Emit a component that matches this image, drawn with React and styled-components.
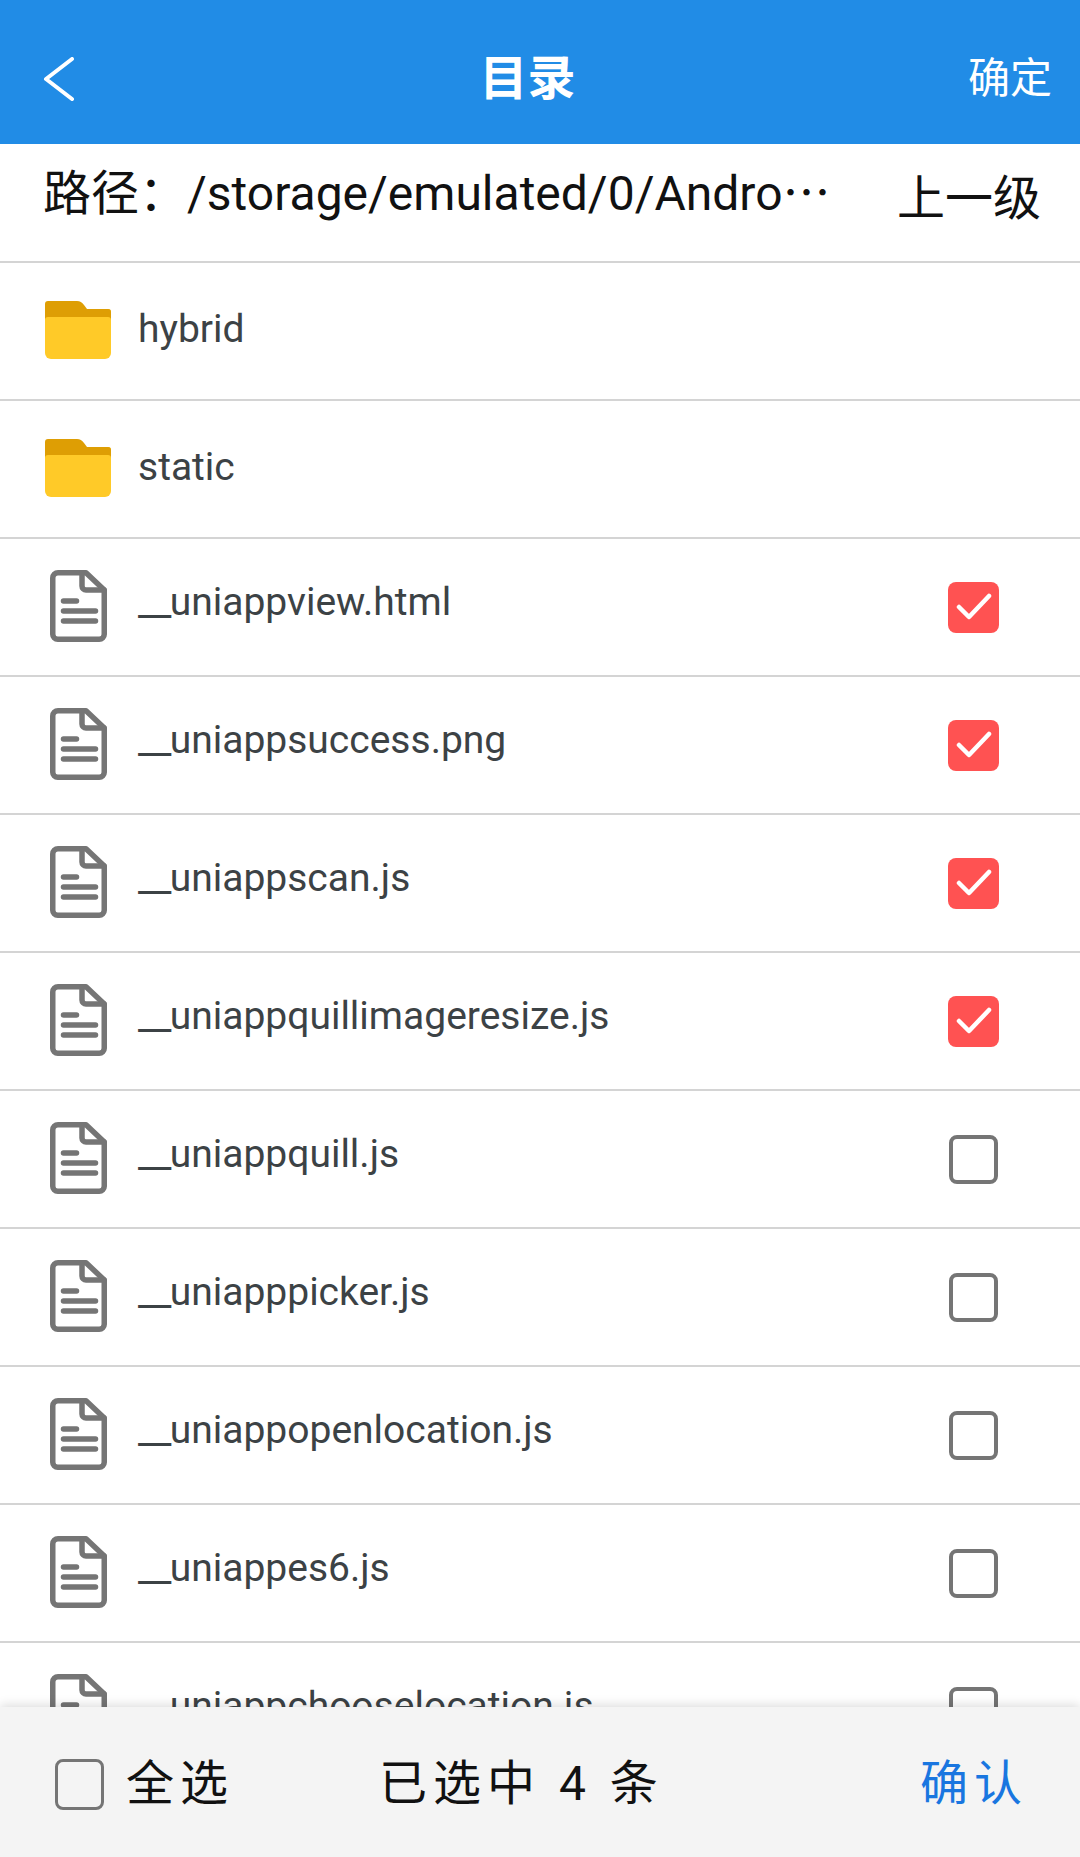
import React from "react";
import styled, { createGlobalStyle } from "styled-components";

const GlobalStyle = createGlobalStyle`
  html, body {
    margin: 0;
    padding: 0;
    background: #fff;
    font-family: Roboto, "Noto Sans CJK SC", sans-serif;
  }
`;

const Page = styled.div`
  position: relative;
  width: 1080px;
  height: 1857px;
  overflow: hidden;
  background: #fff;
`;

const Header = styled.header`
  height: 144px;
  box-sizing: border-box;
  background: #218ce6;
  color: #fff;
  display: grid;
  grid-template-columns: 1fr auto 1fr;
  align-items: center;
  padding: 14px 28px 0 43px;
`;

const BackButton = styled.div`
  display: flex;
  align-items: center;
`;

const Title = styled.div`
  font-size: 48px;
  font-weight: 700;
  line-height: 1;
  margin-left: -40px;
`;

const Action = styled.div`
  font-size: 42px;
  line-height: 1;
  text-align: right;
`;

const PathBar = styled.div`
  height: 117px;
  border-bottom: 2px solid #d4d4d4;
  display: flex;
  align-items: flex-start;
  padding: 0 39px 0 43px;
`;

const PathText = styled.div`
  font-size: 48px;
  line-height: 62px;
  margin-top: 14px;
  color: #111;
  white-space: nowrap;
`;

const Ellipsis = styled.span`
  font-family: "Noto Sans CJK SC", sans-serif;
`;

const ParentLink = styled.div`
  margin-left: auto;
  font-size: 48px;
  line-height: 62px;
  margin-top: 24px;
  color: #111;
`;

const List = styled.div`
  display: flex;
  flex-direction: column;
`;

const Row = styled.div`
  height: 136px;
  flex: none;
  border-bottom: 2px solid #d4d4d4;
  display: flex;
  align-items: center;
  padding: 0 81px 0 45px;
`;

const IconSlot = styled.div`
  width: 66px;
  margin: 0 27px 2px 0;
  display: flex;
  justify-content: center;
`;

const Name = styled.div`
  font-size: 39px;
  line-height: 48px;
  color: #3c4245;
  padding-bottom: ${p => (p.$file ? 10 : 4)}px;
`;

const Prefix = styled.span`
  letter-spacing: -1.750px;
`;

const Check = styled.div`
  margin-left: auto;
  margin-right: ${p => (p.$on ? 0 : 1)}px;
  width: ${p => (p.$on ? 51 : 49)}px;
  height: ${p => (p.$on ? 51 : 49)}px;
  box-sizing: border-box;
  border-radius: 8px;
  background: ${p => (p.$on ? "#ff5252" : "#fff")};
  border: ${p => (p.$on ? "none" : "4px solid #757575")};
  display: flex;
  align-items: center;
  justify-content: center;
`;

const Footer = styled.footer`
  position: absolute;
  left: 0;
  right: 0;
  bottom: 0;
  height: 150px;
  box-sizing: border-box;
  background: #f4f4f4;
  box-shadow: 0 -2px 10px rgba(0, 0, 0, 0.14);
  display: flex;
  align-items: center;
  padding: 4px 52px 0 55px;
`;

const SelectAll = styled.div`
  display: flex;
  align-items: center;
  width: 324px;
`;

const FooterBox = styled.div`
  width: 49px;
  height: 51px;
  box-sizing: border-box;
  border: 3px solid #757575;
  border-radius: 8px;
  margin-right: 22px;
`;

const FooterText = styled.div`
  font-size: 48px;
  line-height: 1;
  letter-spacing: 6px;
  color: ${p => (p.$accent ? "#1976e0" : "#111")};
  margin-left: ${p => (p.$accent ? "auto" : "0")};
  white-space: pre;
`;

const FolderIcon = () => (
  <svg width="66" height="58" viewBox="0 0 66 58">
    <path d="M0 11a3 3 0 0 1 3-3h60a3 3 0 0 1 3 3v41a6 6 0 0 1-6 6H6a6 6 0 0 1-6-6z" fill="#ffca28" />
    <path d="M0 3a3 3 0 0 1 3-3h29c3 0 5 1.500 7 4l3 4h21a3 3 0 0 1 3 3v8a3 3 0 0 0-3-3H3a3 3 0 0 0-3 3z" fill="#de9e04" />
  </svg>
);

const FileIcon = () => (
  <svg width="57" height="72" viewBox="0 0 57 72" fill="none" stroke="#757575" strokeWidth="5.500" strokeLinecap="round" strokeLinejoin="round">
    <path d="M8 2.750h28L54.250 20v44.250a5 5 0 0 1-5 5H7.750a5 5 0 0 1-5-5V8a5.250 5.250 0 0 1 5.250-5.250z" />
    <path d="M32 3v13a4 4 0 0 0 4 4h18" />
    <path d="M13.500 31h13M13.500 41h32M13.500 51h32" />
  </svg>
);

const Tick = () => (
  <svg width="36" height="28" viewBox="0 0 36 28" fill="none" stroke="#fff" strokeWidth="4.500" strokeLinecap="round" strokeLinejoin="round">
    <path d="M3 14l10 10L33 3" />
  </svg>
);

const entries = [
  { name: "hybrid", folder: true },
  { name: "static", folder: true },
  { name: "uniappview.html", on: true },
  { name: "uniappsuccess.png", on: true },
  { name: "uniappscan.js", on: true },
  { name: "uniappquillimageresize.js", on: true },
  { name: "uniappquill.js" },
  { name: "uniapppicker.js" },
  { name: "uniappopenlocation.js" },
  { name: "uniappes6.js" },
  { name: "uniappchooselocation.js" }
];

export default function App() {
  return (
    <Page lang="zh-CN">
      <GlobalStyle />
      <Header>
        <BackButton>
          <svg width="32" height="44" viewBox="0 0 32 44" fill="none" stroke="#fff" strokeWidth="4" strokeLinecap="round" strokeLinejoin="round">
            <path d="M29 2L3 22l26 20" />
          </svg>
        </BackButton>
        <Title>目录</Title>
        <Action>确定</Action>
      </Header>
      <PathBar>
        <PathText>路径：/storage/emulated/0/Andro<Ellipsis>⋯</Ellipsis></PathText>
        <ParentLink>上一级</ParentLink>
      </PathBar>
      <List>
        {entries.map(entry => (
          <Row key={entry.name}>
            <IconSlot>{entry.folder ? <FolderIcon /> : <FileIcon />}</IconSlot>
            <Name $file={!entry.folder}>
              {!entry.folder && <Prefix>__</Prefix>}
              {entry.name}
            </Name>
            {!entry.folder && <Check $on={entry.on}>{entry.on && <Tick />}</Check>}
          </Row>
        ))}
      </List>
      <Footer>
        <SelectAll>
          <FooterBox />
          <FooterText>全选</FooterText>
        </SelectAll>
        <FooterText>已选中 4 条</FooterText>
        <FooterText $accent>确认</FooterText>
      </Footer>
    </Page>
  );
}
